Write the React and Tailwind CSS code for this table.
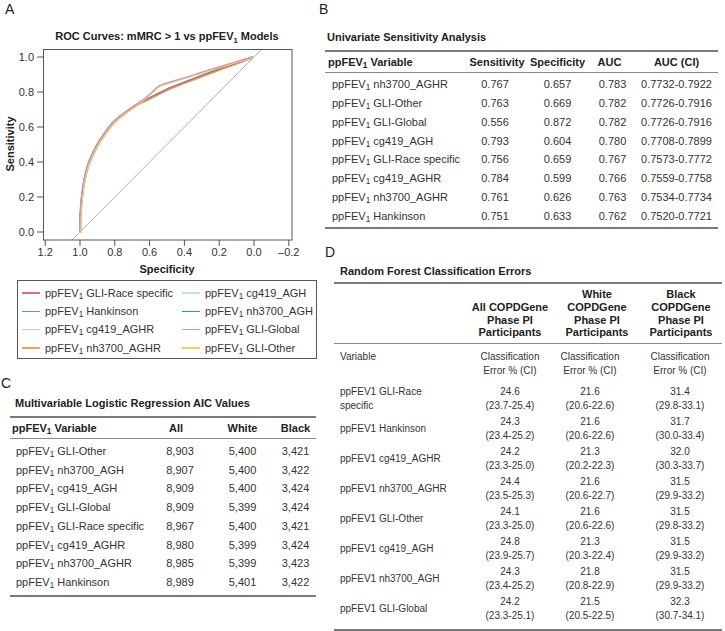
import React from "react";

const X = (spec) => 80 + (1 - spec) * 174;
const Y = (sens) => 232 - sens * 175;

const lower = [
    [1, 0], [0.998, 0.1], [0.99, 0.2], [0.975, 0.3], [0.955, 0.38], [0.93, 0.44], [0.9, 0.5],
    [0.86, 0.56], [0.81, 0.625], [0.75, 0.675], [0.67, 0.73], [0.58, 0.775], [0.5, 0.815],
    [0.4, 0.855], [0.3, 0.893], [0.2, 0.93], [0.1, 0.965], [0.006, 1],
];
const upper = [
    ...lower.slice(0, 11),
    [0.6, 0.785], [0.55, 0.83], [0.5, 0.85], [0.4, 0.88], [0.3, 0.912], [0.2, 0.942], [0.1, 0.972], [0.006, 1],
];

function smoothPath(pts) {
    const p = pts.map(([s, t]) => [X(s), Y(t)]);
    let d = `M${p[0][0]},${p[0][1]}`;
    for (let i = 0; i < p.length - 1; i++) {
        const p0 = p[i - 1] || p[i], p1 = p[i], p2 = p[i + 1], p3 = p[i + 2] || p2;
        const c1 = [p1[0] + (p2[0] - p0[0]) / 6, p1[1] + (p2[1] - p0[1]) / 6];
        const c2 = [p2[0] - (p3[0] - p1[0]) / 6, p2[1] - (p3[1] - p1[1]) / 6];
        d += ` C${c1[0]},${c1[1]} ${c2[0]},${c2[1]} ${p2[0]},${p2[1]}`;
    }
    return d;
}

const curves = [
    { color: "#c8c8c8", base: lower, dx: 0.6, dy: 0.6 },
    { color: "#5b9bd5", base: lower, dx: 0.3, dy: 0.3 },
    { color: "#f4a14d", base: lower, dx: 0.9, dy: 0.9 },
    { color: "#2aa67c", base: lower, dx: -0.4, dy: -0.4 },
    { color: "#d96a8a", base: lower, dx: 0, dy: 0 },
    { color: "#bfe3ee", base: upper, dx: 0.4, dy: 0.4 },
    { color: "#f5cf4a", base: upper, dx: 0.2, dy: 0.5 },
    { color: "#c690d6", base: upper, dx: -0.2, dy: -0.3 },
];

const legend = [
    ["#d96a8a", "GLI-Race specific"], ["#bfe3ee", "cg419_AGH"],
    ["#5b9bd5", "Hankinson"], ["#2aa67c", "nh3700_AGH"],
    ["#c8c8c8", "cg419_AGHR"], ["#c690d6", "GLI-Global"],
    ["#f4a14d", "nh3700_AGHR"], ["#f5cf4a", "GLI-Other"],
];

const uni = [
    ["nh3700_AGHR", "0.767", "0.657", "0.783", "0.7732-0.7922"],
    ["GLI-Other", "0.763", "0.669", "0.782", "0.7726-0.7916"],
    ["GLI-Global", "0.556", "0.872", "0.782", "0.7726-0.7916"],
    ["cg419_AGH", "0.793", "0.604", "0.780", "0.7708-0.7899"],
    ["GLI-Race specific", "0.756", "0.659", "0.767", "0.7573-0.7772"],
    ["cg419_AGHR", "0.784", "0.599", "0.766", "0.7559-0.7758"],
    ["nh3700_AGHR", "0.761", "0.626", "0.763", "0.7534-0.7734"],
    ["Hankinson", "0.751", "0.633", "0.762", "0.7520-0.7721"],
];

const aic = [
    ["GLI-Other", "8,903", "5,400", "3,421"],
    ["nh3700_AGH", "8,907", "5,400", "3,422"],
    ["cg419_AGH", "8,909", "5,400", "3,424"],
    ["GLI-Global", "8,909", "5,399", "3,424"],
    ["GLI-Race specific", "8,967", "5,400", "3,421"],
    ["cg419_AGHR", "8,980", "5,399", "3,424"],
    ["nh3700_AGHR", "8,985", "5,399", "3,423"],
    ["Hankinson", "8,989", "5,401", "3,422"],
];

const rf = [
    [["ppFEV1 GLI-Race", "specific"], "24.6", "(23.7-25.4)", "21.6", "(20.6-22.6)", "31.4", "(29.8-33.1)"],
    [["ppFEV1 Hankinson"], "24.3", "(23.4-25.2)", "21.6", "(20.6-22.6)", "31.7", "(30.0-33.4)"],
    [["ppFEV1 cg419_AGHR"], "24.2", "(23.3-25.0)", "21.3", "(20.2-22.3)", "32.0", "(30.3-33.7)"],
    [["ppFEV1 nh3700_AGHR"], "24.4", "(23.5-25.3)", "21.6", "(20.6-22.7)", "31.5", "(29.9-33.2)"],
    [["ppFEV1 GLI-Other"], "24.1", "(23.3-25.0)", "21.6", "(20.6-22.6)", "31.5", "(29.8-33.2)"],
    [["ppFEV1 cg419_AGH"], "24.8", "(23.9-25.7)", "21.3", "(20.3-22.4)", "31.5", "(29.9-33.2)"],
    [["ppFEV1 nh3700_AGH"], "24.3", "(23.4-25.2)", "21.8", "(20.8-22.9)", "31.5", "(29.9-33.2)"],
    [["ppFEV1 GLI-Global"], "24.2", "(23.3-25.1)", "21.5", "(20.5-22.5)", "32.3", "(30.7-34.1)"],
];

const Fev = ({ children }) => (
    <span>
        ppFEV<sub>1</sub> {children}
    </span>
);

function RocChart() {
    const yTicks = [0, 0.2, 0.4, 0.6, 0.8, 1.0];
    const xTicks = [1.2, 1.0, 0.8, 0.6, 0.4, 0.2, 0.0, -0.2];
    return (
        <svg width="320" height="262" viewBox="0 18 320 262" className="block">
            <text x="167" y="40" textAnchor="middle" fontSize="11" fontWeight="700" fill="#222">
                ROC Curves: mMRC &gt; 1 vs ppFEV<tspan fontSize="7.5" dy="2.5">1</tspan>
                <tspan dy="-2.5"> Models</tspan>
            </text>
            <defs>
                <clipPath id="plot">
                    <rect x="43" y="49" width="249" height="191" />
                </clipPath>
            </defs>
            <line x1="72" y1="240" x2="262" y2="49" stroke="#9a9a9a" strokeWidth="0.8" clipPath="url(#plot)" />
            <g clipPath="url(#plot)" fill="none" strokeWidth="1.1">
                {curves.map((c, i) => (
                    <path key={i} d={smoothPath(c.base)} stroke={c.color} transform={`translate(${c.dx},${c.dy})`} />
                ))}
            </g>
            <rect x="43.5" y="49.5" width="248.5" height="190.5" fill="none" stroke="#555" strokeWidth="1" />
            {yTicks.map((t) => (
                <g key={t}>
                    <line x1="37" x2="43" y1={Y(t)} y2={Y(t)} stroke="#555" />
                    <text x="34" y={Y(t) + 4} textAnchor="end" fontSize="11" fill="#333">
                        {t.toFixed(1)}
                    </text>
                </g>
            ))}
            {xTicks.map((t) => (
                <g key={t}>
                    <line x1={X(t)} x2={X(t)} y1="240" y2="246" stroke="#555" />
                    <text x={X(t)} y="256" textAnchor="middle" fontSize="11" fill="#333">
                        {t < 0 ? "\u2013" + Math.abs(t).toFixed(1) : t.toFixed(1)}
                    </text>
                </g>
            ))}
            <text x="167" y="273" textAnchor="middle" fontSize="11" fontWeight="700" fill="#222">
                Specificity
            </text>
            <text transform="translate(14,144) rotate(-90)" textAnchor="middle" fontSize="11" fontWeight="700" fill="#222">
                Sensitivity
            </text>
        </svg>
    );
}

export default function App() {
    return (
        <div className="w-[725px] h-[631px] overflow-hidden bg-white flex font-['Liberation_Sans',Arial,sans-serif] text-[#333]">
            {/* Left column: A + C */}
            <div className="w-[318px] flex flex-col shrink-0">
                <div className="h-[18px] pl-[5px] text-[14px] leading-[18px] text-[#222]">A</div>
                <RocChart />
                <div className="ml-[17px] w-[300px] h-[79px] border border-[#555] pl-[4px] py-[3px] grid grid-cols-[160px_1fr] text-[11px]">
                    {legend.map(([color, name]) => (
                        <div key={name} className="h-[18.25px] flex items-center gap-[5px]">
                            <span className="w-[18px] h-[1.5px]" style={{ backgroundColor: color }} />
                            <Fev>{name}</Fev>
                        </div>
                    ))}
                </div>

                <div className="mt-[15px] h-[18px] pl-[1px] text-[14px] leading-[18px] text-[#222]">C</div>
                <div className="mt-[4px] pl-[15px] text-[11px] leading-[14px] font-bold text-[#222]">
                    Multivariable Logistic Regression AIC Values
                </div>
                <div className="mt-[6px] ml-[10px] w-[306px] text-[11px]">
                    <div className="h-[2px] bg-[#7a7a7a]" />
                    <div className="h-[20px] grid grid-cols-[140px_60px_65px_1fr] items-center font-bold text-[#222]">
                        <div className="pl-[2px]">
                            <Fev>Variable</Fev>
                        </div>
                        <div className="text-center pr-[8px]">All</div>
                        <div className="text-center">White</div>
                        <div className="text-center">Black</div>
                    </div>
                    <div className="h-px bg-[#8a8a8a]" />
                    <div className="pt-[3px] pb-[3px]">
                        {aic.map((r) => (
                            <div key={r[0]} className="h-[18.7px] grid grid-cols-[140px_60px_65px_1fr] items-center">
                                <div className="pl-[6px]">
                                    <Fev>{r[0]}</Fev>
                                </div>
                                <div className="text-center">{r[1]}</div>
                                <div className="text-center">{r[2]}</div>
                                <div className="text-center">{r[3]}</div>
                            </div>
                        ))}
                    </div>
                    <div className="h-[2px] bg-[#7a7a7a]" />
                </div>
            </div>

            {/* Right column: B + D */}
            <div className="flex-1 flex flex-col">
                <div className="h-[18px] pl-[1px] text-[14px] leading-[18px] text-[#222]">B</div>
                <div className="mt-[12px] pl-[9px] text-[11px] leading-[14px] font-bold text-[#222]">
                    Univariate Sensitivity Analysis
                </div>
                <div className="mt-[6px] ml-[7px] w-[393px] text-[11px]">
                    <div className="h-[2px] bg-[#7a7a7a]" />
                    <div className="h-[20px] grid grid-cols-[140px_60px_65px_45px_1fr] items-center font-bold text-[#222]">
                        <div className="pl-[3px]">
                            <Fev>Variable</Fev>
                        </div>
                        <div className="text-center pl-[4px]">Sensitivity</div>
                        <div className="text-center">Specificity</div>
                        <div className="text-center pr-[6px]">AUC</div>
                        <div className="text-center">AUC (CI)</div>
                    </div>
                    <div className="h-px bg-[#8a8a8a]" />
                    <div className="pt-[2px] pb-[2px]">
                        {uni.map((r, i) => (
                            <div key={i} className="h-[18.8px] grid grid-cols-[140px_60px_65px_45px_1fr] items-center">
                                <div className="pl-[7px]">
                                    <Fev>{r[0]}</Fev>
                                </div>
                                <div className="text-center">{r[1]}</div>
                                <div className="text-center">{r[2]}</div>
                                <div className="text-center">{r[3]}</div>
                                <div className="text-center">{r[4]}</div>
                            </div>
                        ))}
                    </div>
                    <div className="h-[2px] bg-[#7a7a7a]" />
                </div>

                <div className="mt-[14px] h-[18px] pl-[7px] text-[14px] leading-[18px] text-[#222]">D</div>
                <div className="mt-[3px] pl-[22px] text-[11px] leading-[14px] font-bold text-[#222]">
                    Random Forest Classification Errors
                </div>
                <div className="mt-[4px] ml-[16px] w-[388px] text-[10px]">
                    <div className="h-[2px] bg-[#7a7a7a]" />
                    <div className="pt-[4px] pb-[4px] grid grid-cols-[136px_80px_80px_1fr] items-end font-bold text-[#222] leading-[12.7px] text-[11px]">
                        <div />
                        <div className="text-center">
                            All COPDGene
                            <br />
                            Phase PI
                            <br />
                            Participants
                        </div>
                        <div className="text-center pl-[14px]">
                            White
                            <br />
                            COPDGene
                            <br />
                            Phase PI
                            <br />
                            Participants
                        </div>
                        <div className="text-center pl-[10px]">
                            Black
                            <br />
                            COPDGene
                            <br />
                            Phase PI
                            <br />
                            Participants
                        </div>
                    </div>
                    <div className="h-px bg-[#8a8a8a]" />
                    <div className="pt-[6px] pb-[6px] grid grid-cols-[136px_80px_80px_1fr] leading-[14px]">
                        <div className="pl-[6px]">Variable</div>
                        <div className="text-center">
                            Classification
                            <br />
                            Error % (CI)
                        </div>
                        <div className="text-center">
                            Classification
                            <br />
                            Error % (CI)
                        </div>
                        <div className="text-center pl-[8px]">
                            Classification
                            <br />
                            Error % (CI)
                        </div>
                    </div>
                    {rf.map((r, i) => (
                        <div key={i} className="h-[30px] grid grid-cols-[136px_80px_80px_1fr] items-center leading-[14px]">
                            <div className="pl-[6px]">
                                {r[0].map((l) => (
                                    <div key={l}>{l}</div>
                                ))}
                            </div>
                            <div className="text-center">
                                {r[1]}
                                <br />
                                {r[2]}
                            </div>
                            <div className="text-center">
                                {r[3]}
                                <br />
                                {r[4]}
                            </div>
                            <div className="text-center pl-[8px]">
                                {r[5]}
                                <br />
                                {r[6]}
                            </div>
                        </div>
                    ))}
                    <div className="mt-[5px] h-[2px] bg-[#7a7a7a]" />
                </div>
            </div>
        </div>
    );
}
